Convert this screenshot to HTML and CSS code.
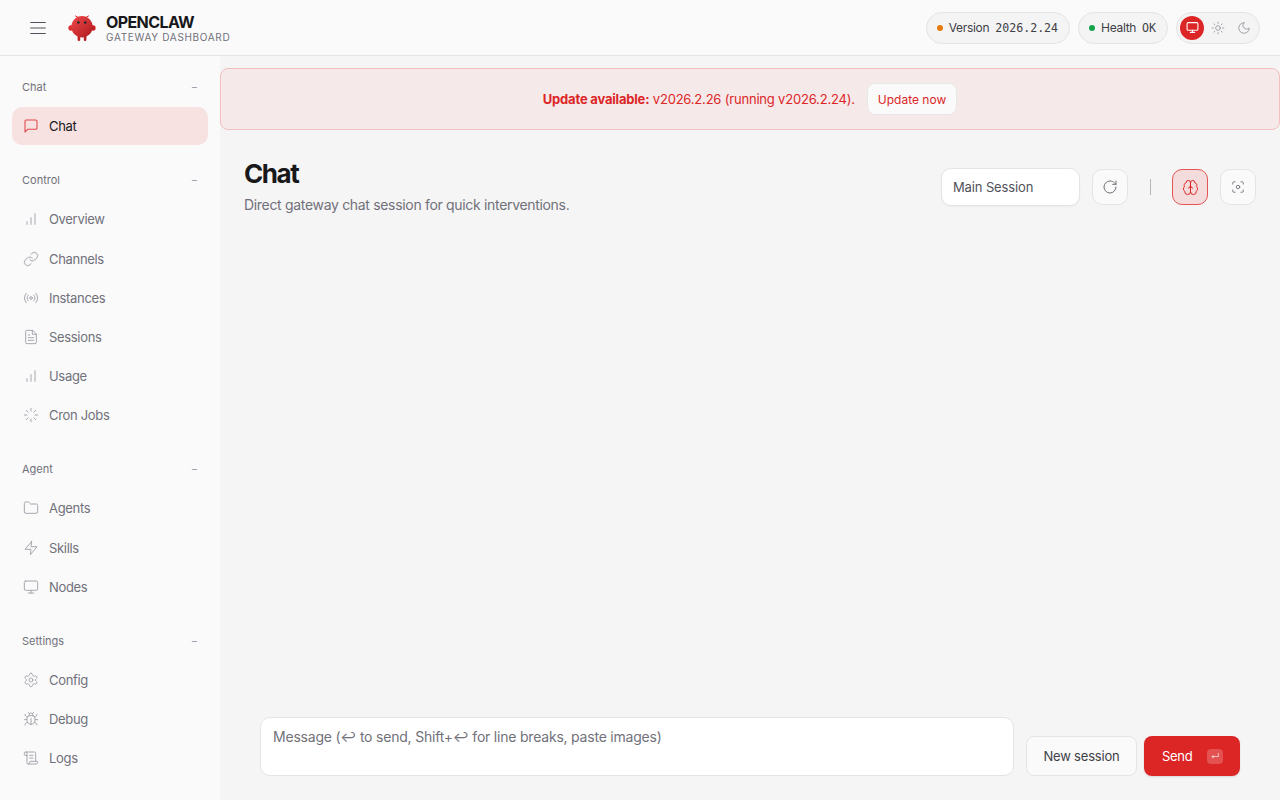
FILE: index.html
```html
<!DOCTYPE html>
<html lang="en">
<head>
    <meta charset="UTF-8">
    <meta name="viewport" content="width=device-width, initial-scale=1.0">
    <title>OpenClaw Gateway Dashboard</title>
    <link rel="stylesheet" href="styles.css">
</head>
<body>

    <header class="topbar">
        <div class="topbar-left">
            <button class="menu-button" type="button">
                <svg class="icon-menu" viewBox="0 0 24 24"><path d="M4 6h16M4 12h16M4 18h16"/></svg>
            </button>
            <svg class="logo" viewBox="0 0 28 26">
                <defs>
                    <linearGradient id="logo-red" x1="0" y1="0" x2="1" y2="1">
                        <stop offset="0" stop-color="#f0484a"/>
                        <stop offset="1" stop-color="#ad1a1e"/>
                    </linearGradient>
                </defs>
                <path d="M7.5 1 10 2.4M20.5 1 18 2.4" stroke="#d92a2c" stroke-width="1" fill="none"/>
                <ellipse cx="2.8" cy="13" rx="2.4" ry="2.8" fill="#dc2f31"/>
                <ellipse cx="25.2" cy="13" rx="2.4" ry="2.8" fill="#c62226"/>
                <rect x="9.6" y="20" width="2.6" height="6" rx="1.2" fill="#c22125"/>
                <rect x="15.8" y="20" width="2.6" height="6" rx="1.2" fill="#b81f23"/>
                <circle cx="14" cy="11.8" r="10.7" fill="url(#logo-red)"/>
                <circle cx="10.4" cy="7.6" r="1.25" fill="#1c2730"/>
                <circle cx="17.2" cy="7.6" r="1.25" fill="#1c2730"/>
            </svg>
            <div class="brand">
                <div class="brand-name">OPENCLAW</div>
                <div class="brand-sub">GATEWAY DASHBOARD</div>
            </div>
        </div>
        <div class="topbar-right">
            <div class="pill"><span class="dot dot-orange"></span>Version <span class="mono">2026.2.24</span></div>
            <div class="pill"><span class="dot dot-green"></span>Health <span class="mono">OK</span></div>
            <div class="pill theme-switch">
                <span class="theme-option theme-active">
                    <svg viewBox="0 0 24 24"><rect x="2" y="3" width="20" height="14" rx="2"/><path d="M8 21h8M12 17v4"/></svg>
                </span>
                <span class="theme-option">
                    <svg viewBox="0 0 24 24"><circle cx="12" cy="12" r="4"/><path d="M12 2v2M12 20v2M4.93 4.93l1.41 1.41M17.66 17.66l1.41 1.41M2 12h2M20 12h2M6.34 17.66l-1.41 1.41M19.07 4.93l-1.41 1.41"/></svg>
                </span>
                <span class="theme-option">
                    <svg viewBox="0 0 24 24"><path d="M12 3a6 6 0 0 0 9 9 9 9 0 1 1-9-9Z"/></svg>
                </span>
            </div>
        </div>
    </header>

    <div class="layout">
        <nav class="sidebar">
            <div class="nav-group">
                <div class="nav-label"><span>Chat</span><span class="nav-toggle">−</span></div>
                <a class="nav-item nav-active" href="#">
                    <svg viewBox="0 0 24 24"><path d="M21 15a2 2 0 0 1-2 2H7l-4 4V5a2 2 0 0 1 2-2h14a2 2 0 0 1 2 2z"/></svg>
                    Chat
                </a>
            </div>

            <div class="nav-group">
                <div class="nav-label"><span>Control</span><span class="nav-toggle">−</span></div>
                <a class="nav-item" href="#">
                    <svg viewBox="0 0 24 24"><path d="M12 20V10M18 20V4M6 20v-4"/></svg>
                    Overview
                </a>
                <a class="nav-item" href="#">
                    <svg viewBox="0 0 24 24"><path d="M10 13a5 5 0 0 0 7.54.54l3-3a5 5 0 0 0-7.07-7.07l-1.72 1.71"/><path d="M14 11a5 5 0 0 0-7.54-.54l-3 3a5 5 0 0 0 7.07 7.07l1.71-1.71"/></svg>
                    Channels
                </a>
                <a class="nav-item" href="#">
                    <svg viewBox="0 0 24 24"><circle cx="12" cy="12" r="2"/><path d="M16.24 7.76a6 6 0 0 1 0 8.49M7.76 16.24a6 6 0 0 1 0-8.49M19.07 4.93a10 10 0 0 1 0 14.14M4.93 19.07a10 10 0 0 1 0-14.14"/></svg>
                    Instances
                </a>
                <a class="nav-item" href="#">
                    <svg viewBox="0 0 24 24"><path d="M14 2H6a2 2 0 0 0-2 2v16a2 2 0 0 0 2 2h12a2 2 0 0 0 2-2V8z"/><path d="M14 2v6h6M16 13H8M16 17H8M10 9H8"/></svg>
                    Sessions
                </a>
                <a class="nav-item" href="#">
                    <svg viewBox="0 0 24 24"><path d="M12 20V10M18 20V4M6 20v-4"/></svg>
                    Usage
                </a>
                <a class="nav-item" href="#">
                    <svg viewBox="0 0 24 24"><path d="M12 2v4M12 18v4M4.93 4.93l2.83 2.83M16.24 16.24l2.83 2.83M2 12h4M18 12h4M4.93 19.07l2.83-2.83M16.24 7.76l2.83-2.83"/></svg>
                    Cron Jobs
                </a>
            </div>

            <div class="nav-group">
                <div class="nav-label"><span>Agent</span><span class="nav-toggle">−</span></div>
                <a class="nav-item" href="#">
                    <svg viewBox="0 0 24 24"><path d="M20 20a2 2 0 0 0 2-2V8a2 2 0 0 0-2-2h-7.9a2 2 0 0 1-1.69-.9L9.6 3.9A2 2 0 0 0 7.93 3H4a2 2 0 0 0-2 2v13a2 2 0 0 0 2 2Z"/></svg>
                    Agents
                </a>
                <a class="nav-item" href="#">
                    <svg viewBox="0 0 24 24"><path d="M13 2 3 14h9l-1 8 10-12h-9l1-8z"/></svg>
                    Skills
                </a>
                <a class="nav-item" href="#">
                    <svg viewBox="0 0 24 24"><rect x="2" y="3" width="20" height="14" rx="2"/><path d="M8 21h8M12 17v4"/></svg>
                    Nodes
                </a>
            </div>

            <div class="nav-group">
                <div class="nav-label"><span>Settings</span><span class="nav-toggle">−</span></div>
                <a class="nav-item" href="#">
                    <svg viewBox="0 0 24 24"><path d="M12.22 2h-.44a2 2 0 0 0-2 2v.18a2 2 0 0 1-1 1.73l-.43.25a2 2 0 0 1-2 0l-.15-.08a2 2 0 0 0-2.73.73l-.22.38a2 2 0 0 0 .73 2.73l.15.1a2 2 0 0 1 1 1.72v.51a2 2 0 0 1-1 1.74l-.15.09a2 2 0 0 0-.73 2.73l.22.38a2 2 0 0 0 2.73.73l.15-.08a2 2 0 0 1 2 0l.43.25a2 2 0 0 1 1 1.73V20a2 2 0 0 0 2 2h.44a2 2 0 0 0 2-2v-.18a2 2 0 0 1 1-1.73l.43-.25a2 2 0 0 1 2 0l.15.08a2 2 0 0 0 2.73-.73l.22-.39a2 2 0 0 0-.73-2.73l-.15-.08a2 2 0 0 1-1-1.74v-.5a2 2 0 0 1 1-1.74l.15-.09a2 2 0 0 0 .73-2.73l-.22-.38a2 2 0 0 0-2.73-.73l-.15.08a2 2 0 0 1-2 0l-.43-.25a2 2 0 0 1-1-1.73V4a2 2 0 0 0-2-2z"/><circle cx="12" cy="12" r="3"/></svg>
                    Config
                </a>
                <a class="nav-item" href="#">
                    <svg viewBox="0 0 24 24"><path d="m8 2 1.88 1.88M14.12 3.88 16 2M9 7.13v-1a3.003 3.003 0 1 1 6 0v1"/><path d="M12 20c-3.3 0-6-2.7-6-6v-3a4 4 0 0 1 4-4h4a4 4 0 0 1 4 4v3c0 3.3-2.7 6-6 6M12 20v-9M6.53 9C4.6 8.8 3 7.1 3 5M6 13H2M3 21c0-2.1 1.7-3.9 3.8-4M20.97 5c0 2.1-1.6 3.8-3.5 4M22 13h-4M17.2 17c2.1.1 3.8 1.9 3.8 4"/></svg>
                    Debug
                </a>
                <a class="nav-item" href="#">
                    <svg viewBox="0 0 24 24"><path d="M15 12h-5M15 8h-5M19 17V5a2 2 0 0 0-2-2H4"/><path d="M8 21h12a2 2 0 0 0 2-2v-1a1 1 0 0 0-1-1H11a1 1 0 0 0-1 1v1a2 2 0 1 1-4 0V5a2 2 0 1 0-4 0v2a1 1 0 0 0 1 1h3"/></svg>
                    Logs
                </a>
            </div>
        </nav>

        <main class="main">
            <div class="update-banner">
                <span><strong>Update available:</strong> v2026.2.26 (running v2026.2.24).</span>
                <button class="update-button" type="button">Update now</button>
            </div>

            <div class="page-head">
                <div>
                    <h1>Chat</h1>
                    <p class="page-sub">Direct gateway chat session for quick interventions.</p>
                </div>
                <div class="page-actions">
                    <div class="session-select">Main Session</div>
                    <button class="icon-button" type="button">
                        <svg viewBox="0 0 24 24"><path d="M21 12a9 9 0 1 1-9-9c2.52 0 4.93 1 6.74 2.74L21 8"/><path d="M21 3v5h-5"/></svg>
                    </button>
                    <span class="action-sep"></span>
                    <button class="icon-button icon-button-on" type="button">
                        <svg viewBox="0 0 24 24"><path d="M12 5a3 3 0 1 0-5.997.125 4 4 0 0 0-2.526 5.77 4 4 0 0 0 .556 6.588A4 4 0 1 0 12 18Z"/><path d="M12 5a3 3 0 1 1 5.997.125 4 4 0 0 1 2.526 5.77 4 4 0 0 1-.556 6.588A4 4 0 1 1 12 18Z"/><path d="M15 13a4.5 4.5 0 0 1-3-4 4.5 4.5 0 0 1-3 4M12 18V9"/></svg>
                    </button>
                    <button class="icon-button icon-button-small" type="button">
                        <svg viewBox="0 0 24 24"><circle cx="12" cy="12" r="3"/><path d="M3 7V5a2 2 0 0 1 2-2h2M17 3h2a2 2 0 0 1 2 2v2M21 17v2a2 2 0 0 1-2 2h-2M7 21H5a2 2 0 0 1-2-2v-2"/></svg>
                    </button>
                </div>
            </div>

            <div class="compose">
                <textarea class="compose-input" placeholder="Message (↩ to send, Shift+↩ for line breaks, paste images)"></textarea>
                <div class="compose-buttons">
                    <button class="new-session" type="button">New session</button>
                    <button class="send-button" type="button">Send<span class="send-key">↵</span></button>
                </div>
            </div>
        </main>
    </div>

</body>
</html>
```

FILE: styles.css
```css
* {
    box-sizing: border-box;
}

body {
    font-family: Inter, "Liberation Sans", sans-serif;
    background-color: #f5f5f5;
    color: #18181b;
    margin: 0;
    height: 100vh;
    overflow: hidden;
    display: flex;
    flex-direction: column;
    letter-spacing: -0.02em;
}

button {
    font-family: inherit;
    letter-spacing: inherit;
    cursor: pointer;
}

svg {
    fill: none;
    stroke: currentColor;
    stroke-width: 1.5;
    stroke-linecap: round;
    stroke-linejoin: round;
}

.topbar {
    height: 56px;
    flex-shrink: 0;
    background-color: #fafafa;
    border-bottom: 1px solid #e4e4e7;
    display: flex;
    align-items: center;
    justify-content: space-between;
    padding: 0 20px 0 20px;
}

.topbar-left {
    display: flex;
    align-items: center;
}

.menu-button {
    width: 36px;
    height: 36px;
    padding: 0;
    border: none;
    background: none;
    color: #52525b;
    display: flex;
    align-items: center;
    justify-content: center;
}

.icon-menu {
    width: 22px;
    height: 22px;
    stroke-width: 1.25;
}

.logo {
    width: 28px;
    height: 26px;
    margin-left: 12px;
    stroke: none;
}

.brand {
    margin-left: 10px;
    padding-top: 2px;
}

.brand-name {
    font-size: 16px;
    font-weight: 700;
    line-height: 18px;
    letter-spacing: -0.6px;
    color: #18181b;
}

.brand-sub {
    font-size: 10px;
    font-weight: 400;
    line-height: 13px;
    letter-spacing: 0.68px;
    color: #71717a;
}

.topbar-right {
    display: flex;
    align-items: center;
    gap: 8px;
}

.pill {
    height: 32px;
    padding: 0 11px 0 10px;
    display: flex;
    align-items: center;
    gap: 6px;
    font-size: 12px;
    font-weight: 400;
    color: #3f3f46;
    background-color: #f4f4f5;
    border: 1px solid #e4e4e7;
    border-radius: 16px;
}

.mono {
    font-family: "DejaVu Sans Mono", "Liberation Mono", monospace;
    font-size: 11.6px;
    letter-spacing: 0;
}

.dot {
    width: 6px;
    height: 6px;
    border-radius: 50%;
}

.dot-orange {
    background-color: #e67a0c;
}

.dot-green {
    background-color: #16a34a;
}

.theme-switch {
    padding: 0 3px;
    gap: 2px;
}

.theme-option {
    width: 24px;
    height: 24px;
    border-radius: 50%;
    color: #8f8f98;
    display: flex;
    align-items: center;
    justify-content: center;
}

.theme-option svg {
    width: 14px;
    height: 14px;
    stroke-width: 1.4;
}

.theme-active {
    background-color: #dc2626;
    color: #fff;
}

.theme-active svg {
    width: 13px;
    height: 13px;
    stroke-width: 2;
}

.layout {
    flex: 1;
    min-height: 0;
    display: flex;
}

.sidebar {
    width: 220px;
    flex-shrink: 0;
    background-color: #fafafa;
    padding: 20px 12px 0 12px;
}

.nav-group {
    margin-bottom: 23.9px;
}

.nav-group:first-child {
    margin-bottom: 24.1px;
}

.nav-label {
    height: 22px;
    margin-bottom: 9px;
    padding: 0 10px;
    display: flex;
    align-items: center;
    justify-content: space-between;
    font-size: 11px;
    font-weight: 400;
    letter-spacing: 0;
    color: #71717a;
}

.nav-toggle {
    color: #a1a1aa;
    font-size: 11px;
}

.nav-item {
    height: 38.2px;
    margin-bottom: 1px;
    padding: 0 11px;
    display: flex;
    align-items: center;
    gap: 10px;
    font-size: 13px;
    font-weight: 400;
    color: #71717a;
    text-decoration: none;
    border-radius: 10px;
}

.nav-item svg {
    width: 16px;
    height: 16px;
    flex-shrink: 0;
    color: #a1a1aa;
    stroke-width: 1.4;
}

.nav-active {
    background-color: #f7e1e1;
    color: #18181b;
}

.nav-active svg {
    color: #dc2626;
    opacity: 0.8;
    stroke-width: 1.6;
}

.main {
    flex: 1;
    min-width: 0;
    display: flex;
    flex-direction: column;
    padding-top: 12px;
}

.update-banner {
    height: 62px;
    display: flex;
    align-items: center;
    justify-content: center;
    gap: 12px;
    font-size: 13px;
    letter-spacing: -0.015em;
    color: #dc2626;
    background-color: #f5e9ea;
    border: 1px solid #f3bfc0;
    border-radius: 8px;
}

.update-button {
    height: 32px;
    padding: 0 10px;
    font-size: 12px;
    font-weight: 400;
    letter-spacing: 0;
    color: #dc2626;
    background-color: #fafafa;
    border: 1px solid #e8e8ea;
    border-radius: 8px;
}

.page-head {
    display: flex;
    justify-content: space-between;
    align-items: flex-start;
    padding: 38px 24px 0 24px;
}

h1 {
    font-size: 26px;
    font-weight: 700;
    line-height: 32px;
    letter-spacing: -1.4px;
    margin: -10px 0 0 0;
}

.page-sub {
    font-size: 14px;
    line-height: 20px;
    color: #71717a;
    margin: 5px 0 0 0;
}

.page-actions {
    display: flex;
    align-items: center;
    gap: 12px;
}

.session-select {
    width: 139px;
    height: 38px;
    padding: 0 11px;
    display: flex;
    align-items: center;
    font-size: 13px;
    font-weight: 400;
    letter-spacing: -0.01em;
    color: #52525b;
    background-color: #fff;
    border: 1px solid #e4e4e7;
    border-radius: 10px;
    box-shadow: 0 1px 2px rgba(0, 0, 0, 0.04);
}

.icon-button {
    width: 36px;
    height: 36px;
    padding: 0;
    display: flex;
    align-items: center;
    justify-content: center;
    color: #71717a;
    background-color: #fafafa;
    border: 1px solid #e4e4e7;
    border-radius: 10px;
}

.icon-button svg {
    width: 16px;
    height: 16px;
}

.icon-button-small svg {
    width: 14px;
    height: 14px;
}

.icon-button-on {
    color: #dc2626;
    background-color: #f5dcdc;
    border-color: #e25555;
}

.icon-button-on svg {
    width: 17px;
    height: 17px;
    stroke-width: 1.4;
}

.action-sep {
    width: 1px;
    height: 16px;
    margin: 0 9.5px;
    background-color: #b4b4bb;
}

.compose {
    margin-top: auto;
    display: flex;
    align-items: flex-end;
    gap: 12px;
    padding: 0 40px 24px 40px;
}

.compose-input {
    flex: 1;
    height: 59px;
    padding: 9px 12px;
    font-family: inherit;
    font-size: 14px;
    line-height: 20px;
    letter-spacing: -0.015em;
    color: #18181b;
    background-color: #fff;
    border: 1px solid #e4e4e7;
    border-radius: 10px;
    resize: none;
    outline: none;
}

.compose-input::placeholder {
    color: #71717a;
    opacity: 1;
}

.compose-buttons {
    display: flex;
    gap: 7px;
}

.new-session {
    width: 111px;
    height: 40px;
    padding: 0;
    font-size: 13px;
    font-weight: 400;
    letter-spacing: -0.015em;
    color: #3f3f46;
    background-color: #fafafa;
    border: 1px solid #e4e4e7;
    border-radius: 8px;
}

.send-button {
    width: 96px;
    height: 40px;
    padding: 0 17px 0 18px;
    display: flex;
    align-items: center;
    justify-content: space-between;
    font-size: 13px;
    font-weight: 400;
    color: #fff;
    background-color: #dc2626;
    border: none;
    border-radius: 8px;
    box-shadow: 0 1px 2px rgba(0, 0, 0, 0.12);
}

.send-key {
    width: 16px;
    height: 15px;
    display: flex;
    align-items: center;
    justify-content: center;
    font-size: 9px;
    color: rgba(255, 255, 255, 0.75);
    background-color: rgba(255, 255, 255, 0.2);
    border-radius: 4px;
}
```
